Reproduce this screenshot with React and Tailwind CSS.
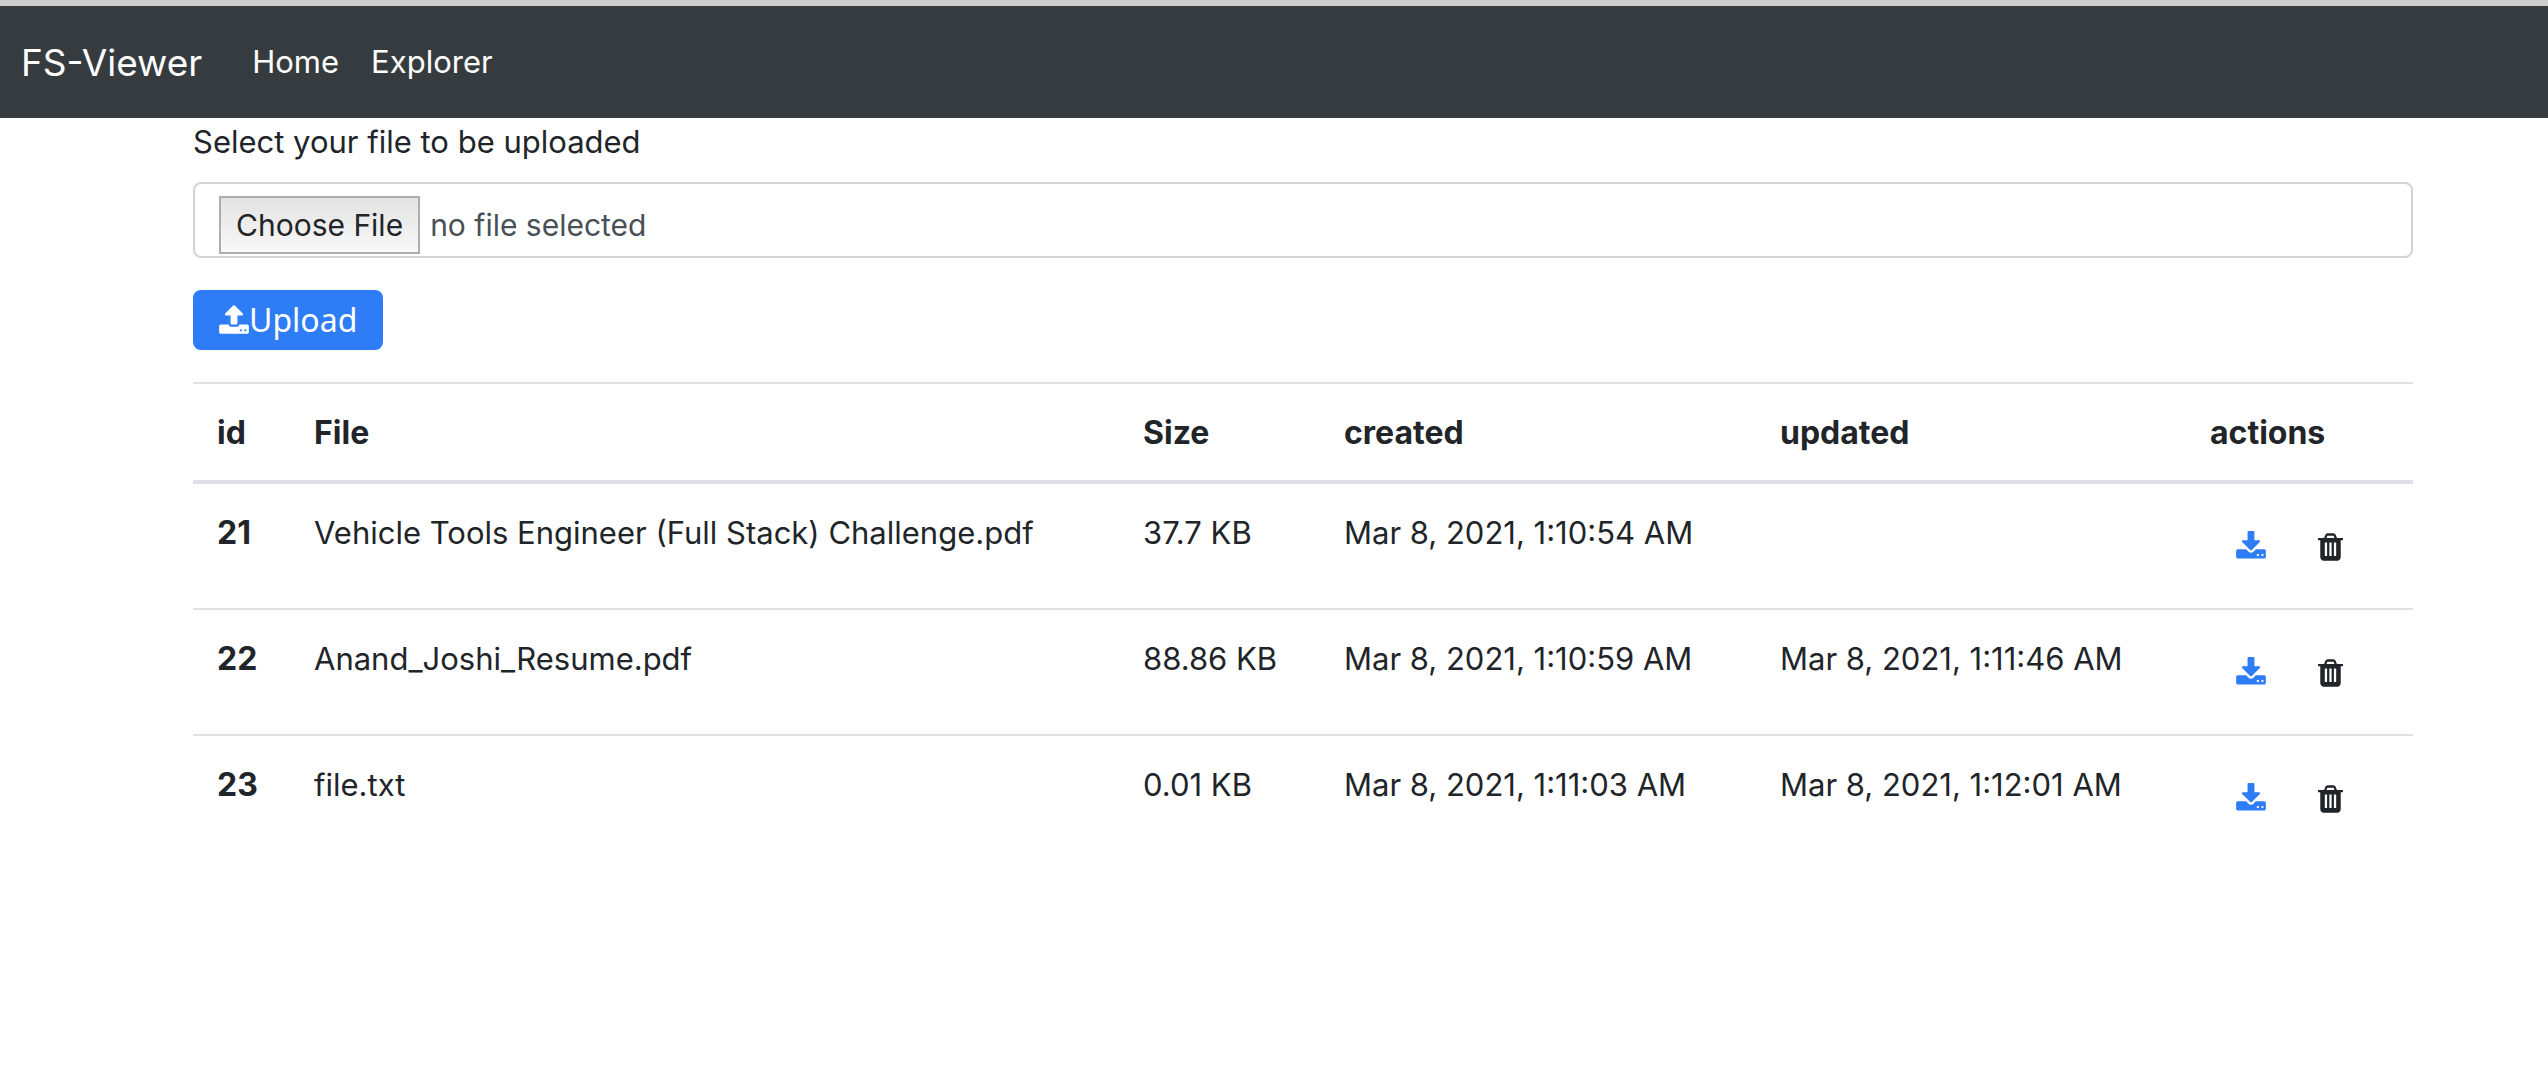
const files = [
  { id: 21, name: "Vehicle Tools Engineer (Full Stack) Challenge.pdf", size: "37.7 KB", created: "Mar 8, 2021, 1:10:54 AM", updated: "" },
  { id: 22, name: "Anand_Joshi_Resume.pdf", size: "88.86 KB", created: "Mar 8, 2021, 1:10:59 AM", updated: "Mar 8, 2021, 1:11:46 AM" },
  { id: 23, name: "file.txt", size: "0.01 KB", created: "Mar 8, 2021, 1:11:03 AM", updated: "Mar 8, 2021, 1:12:01 AM" },
];

function DownloadIcon() {
  return (
    <svg className="h-8 w-[30px]" viewBox="64 0 1664 1792" fill="currentColor" aria-hidden="true">
      <path d="M1344 1344q0-26-19-45t-45-19-45 19-19 45 19 45 45 19 45-19 19-45zm256 0q0-26-19-45t-45-19-45 19-19 45 19 45 45 19 45-19 19-45zm128-224v320q0 40-28 68t-68 28h-1472q-40 0-68-28t-28-68v-320q0-40 28-68t68-28h465l135 136q58 56 136 56t136-56l136-136h464q40 0 68 28t28 68zm-325-569q17 41-14 70l-448 448q-18 19-45 19t-45-19l-448-448q-31-29-14-70 17-39 59-39h256v-448q0-26 19-45t45-19h256q26 0 45 19t19 45v448h256q42 0 59 39z" />
    </svg>
  );
}

function UploadIcon() {
  return (
    <svg className="h-8 w-[30px]" viewBox="64 0 1664 1792" fill="currentColor" aria-hidden="true">
      <path d="M1344 1472q0-26-19-45t-45-19-45 19-19 45 19 45 45 19 45-19 19-45zm256 0q0-26-19-45t-45-19-45 19-19 45 19 45 45 19 45-19 19-45zm128-224v320q0 40-28 68t-68 28h-1472q-40 0-68-28t-28-68v-320q0-40 28-68t68-28h427q21 56 70.5 92t110.5 36h256q61 0 110.5-36t70.5-92h427q40 0 68 28t28 68zm-325-648q-17 40-59 40h-256v448q0 26-19 45t-45 19h-256q-26 0-45-19t-19-45v-448h-256q-42 0-59-40-17-39 14-69l448-448q18-19 45-19t45 19l448 448q31 30 14 69z" />
    </svg>
  );
}

function TrashIcon() {
  return (
    <svg className="h-8 w-[25px]" viewBox="192 0 1408 1792" fill="currentColor" aria-hidden="true">
      <path d="M704 1376v-704q0-14-9-23t-23-9h-64q-14 0-23 9t-9 23v704q0 14 9 23t23 9h64q14 0 23-9t9-23zm256 0v-704q0-14-9-23t-23-9h-64q-14 0-23 9t-9 23v704q0 14 9 23t23 9h64q14 0 23-9t9-23zm256 0v-704q0-14-9-23t-23-9h-64q-14 0-23 9t-9 23v704q0 14 9 23t23 9h64q14 0 23-9t9-23zm-544-992h448l-48-117q-7-9-17-11h-317q-10 2-17 11zm928 32v64q0 14-9 23t-23 9h-96v948q0 83-47 143.5t-113 60.5h-832q-66 0-113-58.5t-47-141.5v-952h-96q-14 0-23-9t-9-23v-64q0-14 9-23t23-9h309l70-167q15-37 54-63t79-26h320q40 0 79 26t54 63l70 167h309q14 0 23 9t9 23z" />
    </svg>
  );
}

function Navbar() {
  return (
    <nav className="flex h-28 items-center bg-[#363b3f] px-[21px] pt-px text-white">
      <a href="#" className="mr-[50px] text-[37px]">FS-Viewer</a>
      <ul className="flex gap-8 text-[31px]">
        <li><a href="#home">Home</a></li>
        <li><a href="#explorer">Explorer</a></li>
      </ul>
    </nav>
  );
}

function UploadForm() {
  return (
    <form className="flex flex-col items-start" onSubmit={(e) => e.preventDefault()}>
      <label htmlFor="file" className="mb-4 leading-[48px]">Select your file to be uploaded</label>
      <input id="file" type="file" className="sr-only" />
      <label
        htmlFor="file"
        className="flex h-[76px] w-full items-start gap-[10px] rounded-lg border-2 border-[#ced4da] px-6 pt-3 text-[30px] leading-[54px] text-[#495057]"
      >
        <span className="border-2 border-[#adadad] bg-linear-to-b from-[#e3e3e3] to-[#f8f8f8] px-[15px] text-[#212529]">Choose File</span>
        <span className="leading-[58px]">no file selected</span>
      </label>
      <button
        type="submit"
        className="mt-8 flex h-[60px] items-center rounded-lg bg-[#2e7cf6] px-[26px] font-['Noto_Sans',sans-serif] text-[32px] text-white"
      >
        <UploadIcon />
        Upload
      </button>
    </form>
  );
}

function FileTable() {
  return (
    <table className="mt-8 w-full border-separate border-spacing-0 text-left leading-[48px]">
      <thead className="text-[32px]">
        <tr className="*:border-t-2 *:border-b-4 *:border-[#dee2e6] *:px-6 *:pt-[25px] *:pb-[23px]">
          <th scope="col" className="w-[97px]">id</th>
          <th scope="col">File</th>
          <th scope="col" className="w-[201px]">Size</th>
          <th scope="col" className="w-[436px]">created</th>
          <th scope="col" className="w-[430px]">updated</th>
          <th scope="col" className="w-[227px]">actions</th>
        </tr>
      </thead>
      <tbody>
        {files.map((f) => (
          <tr key={f.id} className="*:border-t-2 *:border-[#dee2e6] *:px-6 *:pt-[25px] *:pb-[23px] *:align-top first:*:border-t-0">
            <th scope="row" className="text-[32px]">{f.id}</th>
            <td>{f.name}</td>
            <td>{f.size}</td>
            <td>{f.created}</td>
            <td>{f.updated}</td>
            <td>
              <div className="flex">
                <button type="button" aria-label="Download" className="flex h-[76px] items-center px-[26px] text-[#2e7cf6]">
                  <DownloadIcon />
                </button>
                <button type="button" aria-label="Delete" className="flex h-[76px] items-center px-[26px]">
                  <TrashIcon />
                </button>
              </div>
            </td>
          </tr>
        ))}
      </tbody>
    </table>
  );
}

export default function App() {
  return (
    <div className="min-h-screen border-t-[6px] border-[#cecece] bg-white font-[Inter,sans-serif] text-[31px] text-[#212529]">
      <Navbar />
      <main className="mr-[135px] ml-[193px]">
        <UploadForm />
        <FileTable />
      </main>
    </div>
  );
}
